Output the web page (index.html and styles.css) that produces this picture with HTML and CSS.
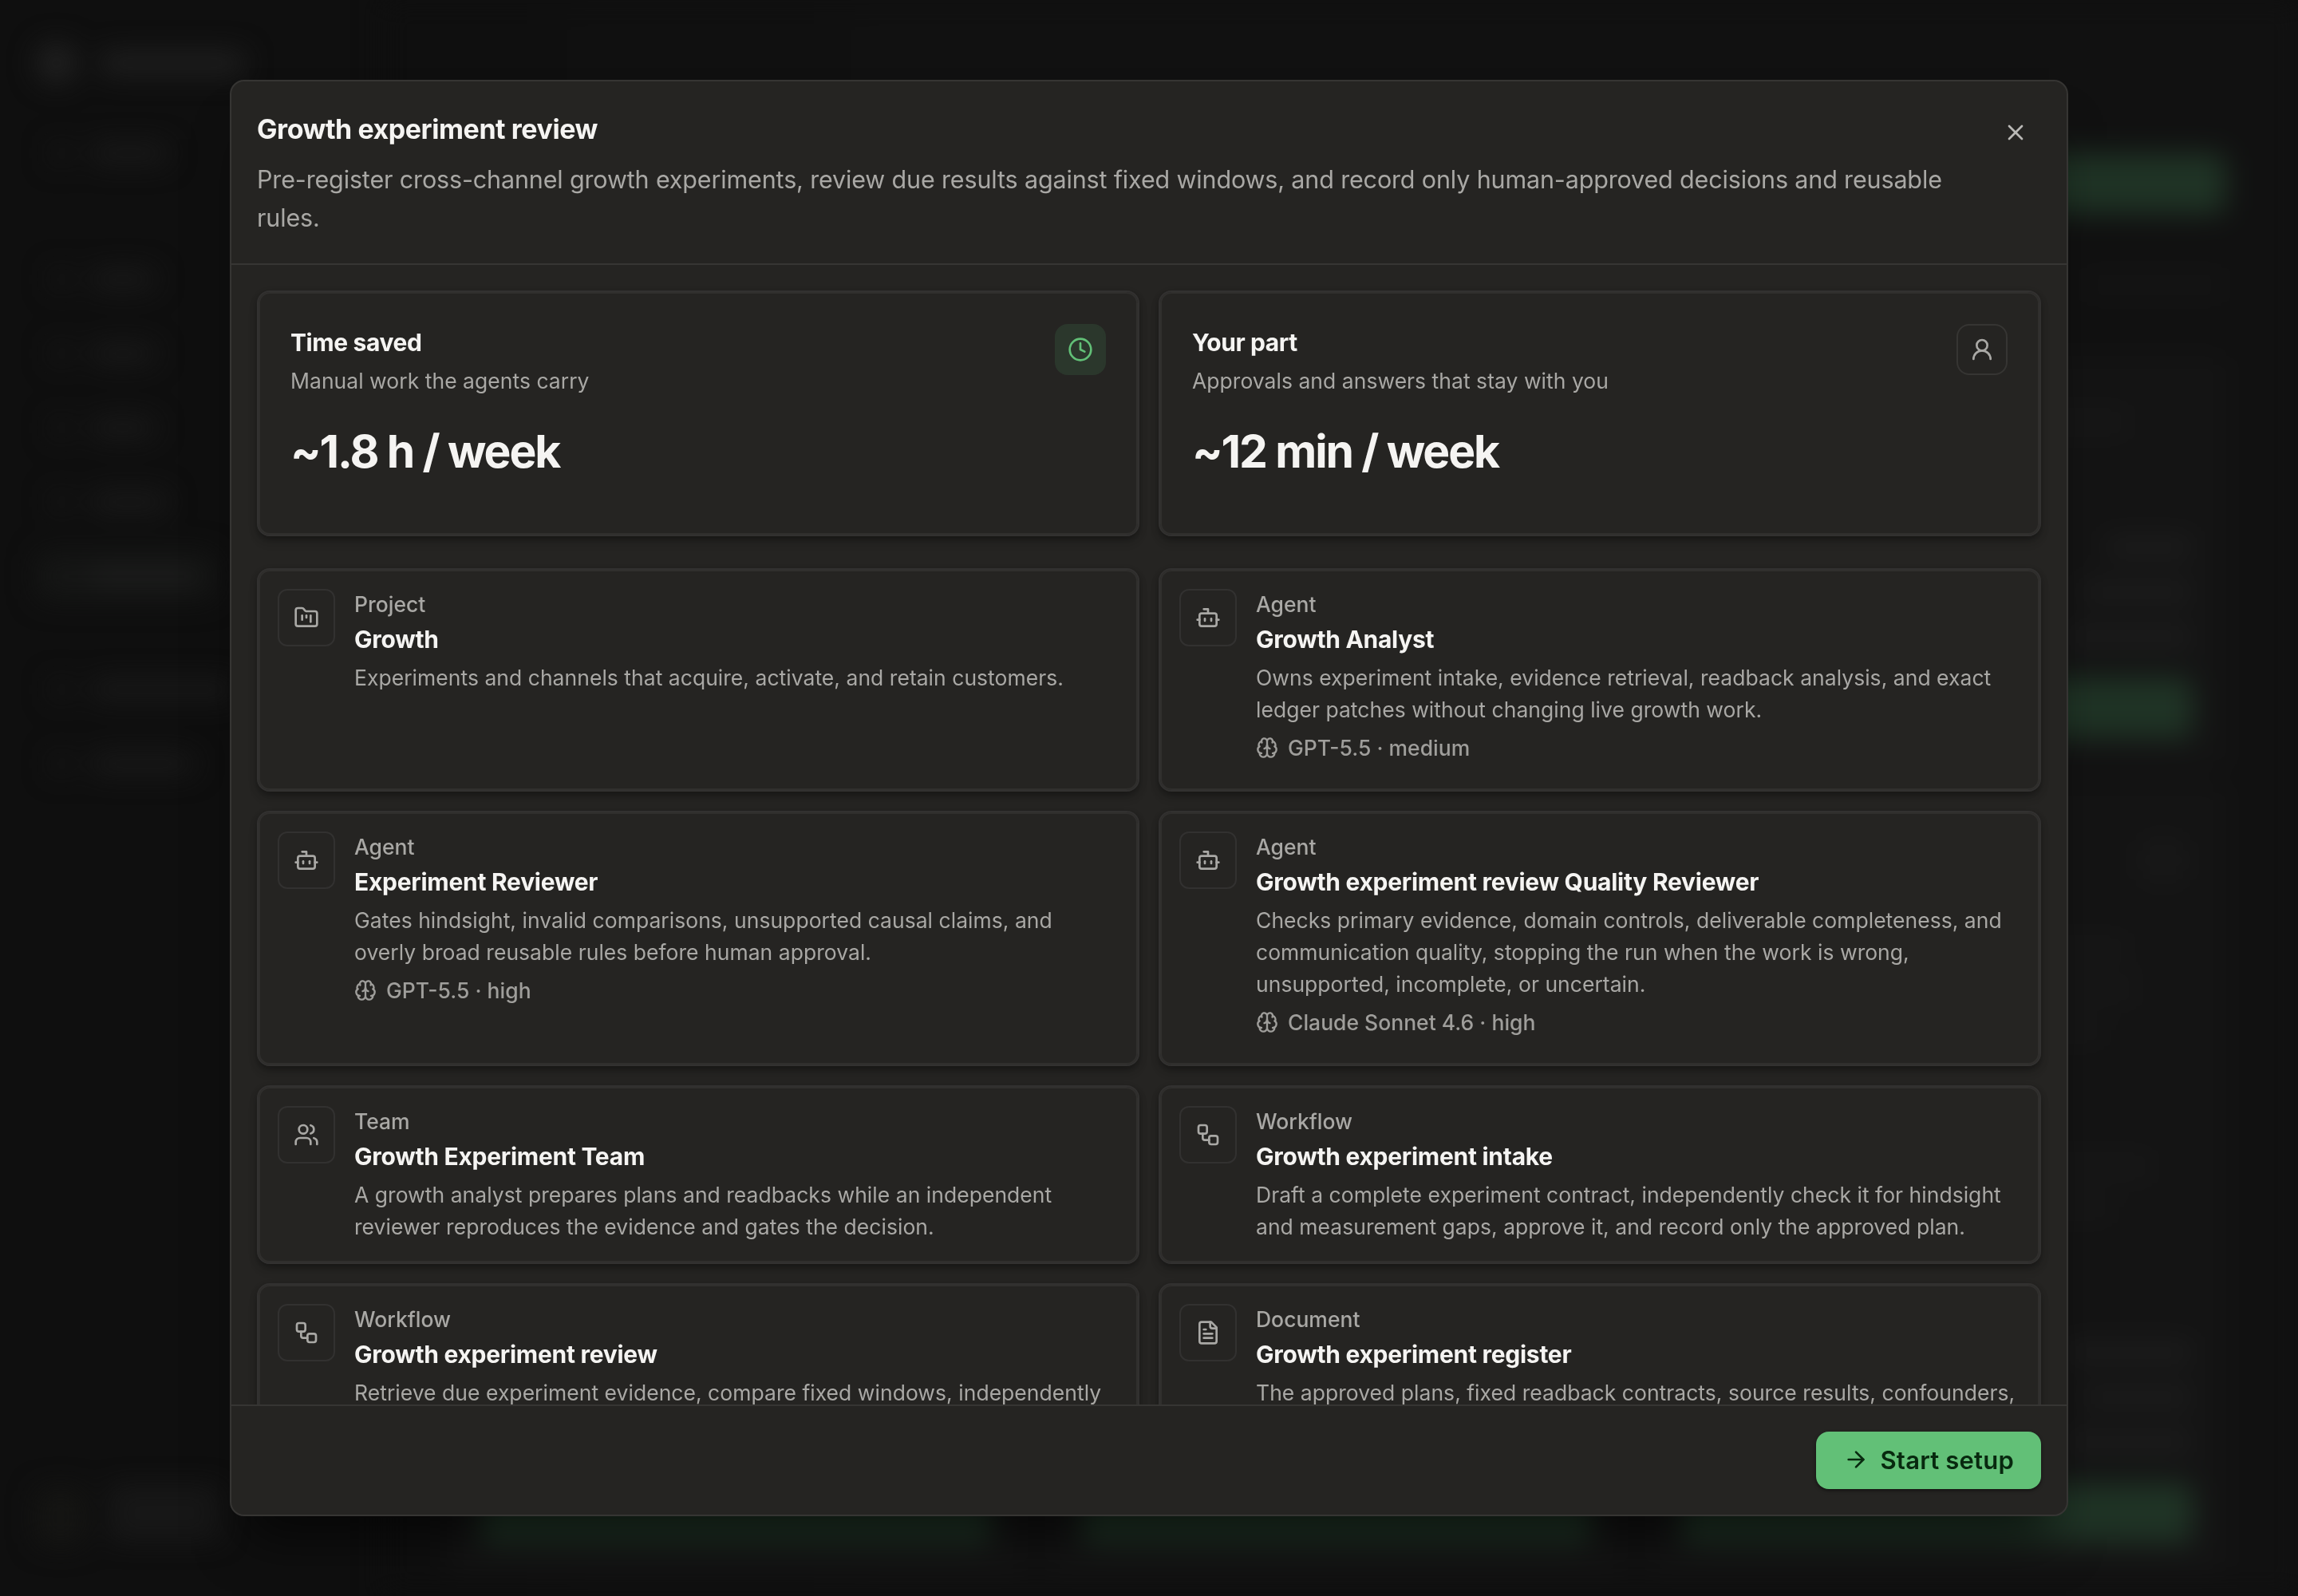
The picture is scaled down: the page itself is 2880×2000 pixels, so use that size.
FILE: index.html
```html
<!DOCTYPE html>
<html lang="en">
<head>
  <meta charset="UTF-8" />
  <meta name="viewport" content="width=device-width, initial-scale=1.0" />
  <title>Growth experiment review</title>
  <link rel="stylesheet" href="styles.css">
</head>
<body>
  <!-- Icon set -->
  <svg class="icon-defs" aria-hidden="true">
    <symbol id="i-close" viewBox="0 0 24 24"><path d="M18 6 6 18" /><path d="m6 6 12 12" /></symbol>
    <symbol id="i-clock" viewBox="0 0 24 24"><circle cx="12" cy="12" r="10" /><path d="M12 6v6l4 2" /></symbol>
    <symbol id="i-user" viewBox="0 0 24 24"><circle cx="12" cy="8" r="5" /><path d="M20 21a8 8 0 0 0-16 0" /></symbol>
    <symbol id="i-project" viewBox="0 0 24 24"><path d="M4 20h16a2 2 0 0 0 2-2V8a2 2 0 0 0-2-2h-7.93a2 2 0 0 1-1.66-.9l-.82-1.2A2 2 0 0 0 7.93 3H4a2 2 0 0 0-2 2v13c0 1.1.9 2 2 2Z" /><path d="M8 10v4" /><path d="M12 10v2" /><path d="M16 10v6" /></symbol>
    <symbol id="i-agent" viewBox="0 0 24 24"><path d="M12 8V4H8" /><rect width="16" height="12" x="4" y="8" rx="2" /><path d="M2 14h2" /><path d="M20 14h2" /><path d="M15 13v2" /><path d="M9 13v2" /></symbol>
    <symbol id="i-team" viewBox="0 0 24 24"><path d="M16 21v-2a4 4 0 0 0-4-4H6a4 4 0 0 0-4 4v2" /><circle cx="9" cy="7" r="4" /><path d="M22 21v-2a4 4 0 0 0-3-3.87" /><path d="M16 3.13a4 4 0 0 1 0 7.75" /></symbol>
    <symbol id="i-workflow" viewBox="0 0 24 24"><rect width="8" height="8" x="3" y="3" rx="2" /><path d="M7 11v4a2 2 0 0 0 2 2h4" /><rect width="8" height="8" x="13" y="13" rx="2" /></symbol>
    <symbol id="i-document" viewBox="0 0 24 24"><path d="M15 2H6a2 2 0 0 0-2 2v16a2 2 0 0 0 2 2h12a2 2 0 0 0 2-2V7Z" /><path d="M14 2v4a2 2 0 0 0 2 2h4" /><path d="M10 9H8" /><path d="M16 13H8" /><path d="M16 17H8" /></symbol>
    <symbol id="i-brain" viewBox="0 0 24 24"><path d="M12 18V5" /><path d="M15 13a4.17 4.17 0 0 1-3-4 4.17 4.17 0 0 1-3 4" /><path d="M17.598 6.5A3 3 0 1 0 12 5a3 3 0 1 0-5.598 1.5" /><path d="M17.997 5.125a4 4 0 0 1 2.526 5.77" /><path d="M18 18a4 4 0 0 0 2-7.464" /><path d="M19.967 17.483A4 4 0 1 1 12 18a4 4 0 1 1-7.967-.517" /><path d="M6 18a4 4 0 0 1-2-7.464" /><path d="M6.003 5.125a4 4 0 0 0-2.526 5.77" /></symbol>
    <symbol id="i-arrow" viewBox="0 0 24 24"><path d="M5 12h14" /><path d="m12 5 7 7-7 7" /></symbol>
  </svg>

  <!-- App behind the dialog -->
  <div class="app" aria-hidden="true">
    <aside class="sidebar">
      <div class="brand"><i class="logo"></i><i class="bar brand-name"></i></div>
      <div class="nav">
        <div class="nav-item first"><i class="dot"></i><i class="bar w-m"></i></div>
        <div class="nav-item"><i class="dot"></i><i class="bar w-s"></i></div>
        <div class="nav-item"><i class="dot"></i><i class="bar w-s"></i></div>
        <div class="nav-item"><i class="dot"></i><i class="bar w-s"></i></div>
        <div class="nav-item"><i class="dot"></i><i class="bar w-m"></i></div>
        <div class="nav-item active"><i class="dot"></i><i class="bar w-l"></i></div>
        <div class="nav-item second"><i class="dot"></i><i class="bar w-xl"></i></div>
        <div class="nav-item"><i class="dot"></i><i class="bar w-l"></i></div>
      </div>
      <div class="account">
        <i class="avatar"></i>
        <div class="account-text"><i class="bar"></i><i class="bar"></i></div>
      </div>
    </aside>
    <div class="main">
      <div class="page-head"><i class="button"></i></div>
      <div class="page-filter"><i class="bar"></i></div>
      <div class="tiles">
        <div class="tile"></div>
        <div class="tile"></div>
        <div class="tile">
          <i class="bar title"></i>
          <div class="stats"><i class="bar s1"></i><i class="bar s2"></i><i class="bar s3"></i></div>
          <i class="button"></i>
        </div>
        <div class="tile"><i class="button"></i></div>
        <div class="tile"><i class="button"></i></div>
        <div class="tile">
          <i class="badge"></i>
          <div class="lines"><i class="bar l1"></i><i class="bar l2"></i><i class="bar l3"></i></div>
          <div class="lines more"><i class="bar l4"></i><i class="bar l5"></i></div>
          <div class="stats"><i class="bar s3"></i><i class="bar s2"></i><i class="bar s3"></i></div>
          <i class="button"></i>
        </div>
      </div>
    </div>
  </div>

  <!-- Dialog -->
  <div class="overlay">
    <div class="modal" role="dialog" aria-labelledby="modal-title">
      <header class="modal-header">
        <div>
          <h1 id="modal-title">Growth experiment review</h1>
          <p>Pre-register cross-channel growth experiments, review due results against fixed windows, and record only human-approved decisions and reusable rules.</p>
        </div>
        <button class="close" aria-label="Close"><svg class="icon"><use href="#i-close" /></svg></button>
      </header>

      <div class="modal-body">
        <div class="grid summary">
          <section class="card stat">
            <div>
              <h2>Time saved</h2>
              <p>Manual work the agents carry</p>
              <strong>~1.8 h / week</strong>
            </div>
            <span class="stat-icon green"><svg class="icon"><use href="#i-clock" /></svg></span>
          </section>
          <section class="card stat">
            <div>
              <h2>Your part</h2>
              <p>Approvals and answers that stay with you</p>
              <strong>~12 min / week</strong>
            </div>
            <span class="stat-icon"><svg class="icon"><use href="#i-user" /></svg></span>
          </section>
        </div>

        <div class="grid">
          <section class="card item">
            <span class="item-icon"><svg class="icon"><use href="#i-project" /></svg></span>
            <div class="item-text">
              <span class="kind">Project</span>
              <h2>Growth</h2>
              <p>Experiments and channels that acquire, activate, and retain customers.</p>
            </div>
          </section>
          <section class="card item">
            <span class="item-icon"><svg class="icon"><use href="#i-agent" /></svg></span>
            <div class="item-text">
              <span class="kind">Agent</span>
              <h2>Growth Analyst</h2>
              <p>Owns experiment intake, evidence retrieval, readback analysis, and exact ledger patches without changing live growth work.</p>
              <div class="model"><svg class="icon"><use href="#i-brain" /></svg>GPT-5.5 · medium</div>
            </div>
          </section>
          <section class="card item">
            <span class="item-icon"><svg class="icon"><use href="#i-agent" /></svg></span>
            <div class="item-text">
              <span class="kind">Agent</span>
              <h2>Experiment Reviewer</h2>
              <p>Gates hindsight, invalid comparisons, unsupported causal claims, and overly broad reusable rules before human approval.</p>
              <div class="model"><svg class="icon"><use href="#i-brain" /></svg>GPT-5.5 · high</div>
            </div>
          </section>
          <section class="card item">
            <span class="item-icon"><svg class="icon"><use href="#i-agent" /></svg></span>
            <div class="item-text">
              <span class="kind">Agent</span>
              <h2>Growth experiment review Quality Reviewer</h2>
              <p>Checks primary evidence, domain controls, deliverable completeness, and communication quality, stopping the run when the work is wrong, unsupported, incomplete, or uncertain.</p>
              <div class="model"><svg class="icon"><use href="#i-brain" /></svg>Claude Sonnet 4.6 · high</div>
            </div>
          </section>
          <section class="card item">
            <span class="item-icon"><svg class="icon"><use href="#i-team" /></svg></span>
            <div class="item-text">
              <span class="kind">Team</span>
              <h2>Growth Experiment Team</h2>
              <p>A growth analyst prepares plans and readbacks while an independent reviewer reproduces the evidence and gates the decision.</p>
            </div>
          </section>
          <section class="card item">
            <span class="item-icon"><svg class="icon"><use href="#i-workflow" /></svg></span>
            <div class="item-text">
              <span class="kind">Workflow</span>
              <h2>Growth experiment intake</h2>
              <p>Draft a complete experiment contract, independently check it for hindsight and measurement gaps, approve it, and record only the approved plan.</p>
            </div>
          </section>
          <section class="card item">
            <span class="item-icon"><svg class="icon"><use href="#i-workflow" /></svg></span>
            <div class="item-text">
              <span class="kind">Workflow</span>
              <h2>Growth experiment review</h2>
              <p>Retrieve due experiment evidence, compare fixed windows, independently</p>
            </div>
          </section>
          <section class="card item">
            <span class="item-icon"><svg class="icon"><use href="#i-document" /></svg></span>
            <div class="item-text">
              <span class="kind">Document</span>
              <h2>Growth experiment register</h2>
              <p>The approved plans, fixed readback contracts, source results, confounders,</p>
            </div>
          </section>
        </div>
      </div>

      <footer class="modal-footer">
        <button class="primary"><svg class="icon"><use href="#i-arrow" /></svg>Start setup</button>
      </footer>
    </div>
  </div>
</body>
</html>
```
FILE: styles.css
```css
:root {
  --page: #0f0f0f;
  --panel: #252422;
  --line: #363533;
  --text: #f5f4f2;
  --muted: #a9a8a5;
  --green: #62c077;
}
* {
  box-sizing: border-box;
}
body {
  margin: 0;
  height: 2000px;
  overflow: hidden;
  background: var(--page);
  color: var(--text);
  font-family: Inter, "Liberation Sans", sans-serif;
}
h1, h2, p {
  margin: 0;
}
button {
  border: 0;
  padding: 0;
  background: none;
  font: inherit;
}
.icon-defs {
  display: none;
}
.icon {
  width: 32px;
  height: 32px;
  flex: none;
  fill: none;
  stroke: currentColor;
  stroke-width: 2;
  stroke-linecap: round;
  stroke-linejoin: round;
}

/* App behind the dialog */
.app {
  display: flex;
  height: 2000px;
  filter: blur(17px);
}
.app i {
  display: block;
}
.bar {
  height: 22px;
  background: #1b1b1b;
  border-radius: 8px;
}
.sidebar {
  width: 480px;
  padding: 54px 0 64px 46px;
  display: flex;
  flex-direction: column;
}
.brand {
  display: flex;
  align-items: center;
  gap: 30px;
}
.logo {
  width: 50px;
  height: 50px;
  border-radius: 50%;
  background: #212121;
}
.brand-name {
  width: 180px;
  height: 26px;
  background: #212121;
}
.nav-item {
  display: flex;
  align-items: center;
  gap: 26px;
  width: 300px;
  height: 60px;
  margin-bottom: 33px;
  padding-left: 18px;
  border-radius: 12px;
}
.nav-item.first {
  margin: 58px 0 98px;
}
.nav-item.second {
  margin-top: 82px;
}
.nav-item.active {
  width: 225px;
  background: #151615;
}
.nav-item.active .bar {
  background: #1e1e1e;
}
.dot {
  width: 24px;
  height: 24px;
  border-radius: 6px;
  background: #161616;
}
.w-s { width: 80px; }
.w-m { width: 96px; }
.w-l { width: 130px; }
.w-xl { width: 180px; }
.account {
  display: flex;
  gap: 30px;
  margin-top: auto;
}
.avatar {
  width: 60px;
  height: 70px;
  border-radius: 12px;
  background: #151513;
}
.account-text {
  display: flex;
  flex-direction: column;
  gap: 12px;
}
.account-text .bar {
  width: 140px;
  height: 24px;
}
.main {
  flex: 1;
  padding: 192px 90px 0 80px;
  background: linear-gradient(90deg, #0f0f0f, #111111 30%);
}
.page-head {
  display: flex;
  justify-content: flex-end;
}
.button {
  height: 76px;
  border-radius: 14px;
  background: #1f3325;
}
.page-head .button {
  width: 340px;
}
.page-filter {
  display: flex;
  justify-content: flex-end;
  padding: 78px 0;
}
.page-filter .bar {
  width: 180px;
  background: #151515;
}
.tiles {
  display: grid;
  grid-template-columns: repeat(3, 1fr);
  grid-template-rows: 517px 989px;
  gap: 20px 28px;
}
.tile {
  display: flex;
  flex-direction: column;
  padding: 38px 42px;
  border-radius: 16px;
  background: #141414;
}
.tile > .button {
  margin-top: auto;
}
.stats {
  display: flex;
  flex-direction: column;
  align-items: flex-end;
  gap: 34px;
  margin: auto 0 40px;
}
.stats .bar {
  background: #1e1e1e;
}
.stats + .button {
  margin-top: 0;
}
.s1 { width: 110px; }
.s2 { width: 140px; }
.s3 { width: 160px; }
.title {
  width: 560px;
  margin-top: 34px;
  background: #191919;
}
.badge {
  align-self: flex-end;
  width: 50px;
  height: 50px;
  margin: 32px 12px 0 0;
  border-radius: 12px;
  background: #191919;
}
.lines {
  display: flex;
  flex-direction: column;
  gap: 28px;
  margin-top: 76px;
}
.lines .bar {
  background: #191919;
}
.lines.more {
  margin-top: 150px;
}
.l1 { width: 560px; }
.l2 { width: 570px; }
.l3 { width: 530px; }
.l4 { width: 590px; }
.l5 { width: 540px; }

/* Dialog shell */
.overlay {
  position: fixed;
  inset: 0;
  display: flex;
  align-items: center;
  justify-content: center;
}
.modal {
  display: flex;
  flex-direction: column;
  width: 2304px;
  height: 1800px;
  overflow: hidden;
  border: 2px solid var(--line);
  border-radius: 18px;
  background: var(--panel);
  box-shadow: 0 50px 60px -24px rgba(0, 0, 0, 0.6);
}
.modal-header {
  display: flex;
  justify-content: space-between;
  padding: 32px 32px 33px;
  border-bottom: 2px solid var(--line);
}
.modal-header h1 {
  font-size: 34px;
  line-height: 56px;
  font-weight: 650;
  letter-spacing: -0.45px;
}
.modal-header p {
  max-width: 2140px;
  margin-top: 11px;
  color: var(--muted);
  font-size: 30.5px;
  line-height: 48px;
  letter-spacing: -0.15px;
}
.close {
  display: flex;
  align-items: center;
  justify-content: center;
  width: 64px;
  height: 64px;
  color: #bab9b6;
}
.modal-body {
  flex: 1;
  min-height: 0;
  overflow: hidden;
  padding: 32px 32px 0;
}
.modal-footer {
  display: flex;
  justify-content: flex-end;
  padding: 32px;
  border-top: 2px solid var(--line);
}
.primary {
  display: flex;
  align-items: center;
  gap: 14px;
  height: 72px;
  padding: 0 34px 2px;
  border-radius: 16px;
  background: var(--green);
  box-shadow: 0 2px 4px rgba(0, 0, 0, 0.5);
  color: #08290f;
  font-size: 31px;
  font-weight: 600;
  letter-spacing: 0.2px;
}

/* Cards */
.grid {
  display: grid;
  grid-template-columns: 1fr 1fr;
  gap: 24px;
}
.summary {
  margin-bottom: 40px;
}
.card {
  display: flex;
  border: 2px solid #323130;
  border-radius: 16px;
  box-shadow: inset 0 0 0 2px #302f2d, 0 4px 8px rgba(0, 0, 0, 0.3), 0 8px 16px -4px rgba(0, 0, 0, 0.15);
}
.card h2 {
  font-size: 30px;
  font-weight: 650;
  letter-spacing: -0.27px;
}
.card p {
  color: var(--muted);
  font-size: 26.5px;
  line-height: 40px;
  letter-spacing: 0.03px;
}
.stat {
  justify-content: space-between;
  height: 308px;
  padding: 40px;
}
.stat h2 {
  line-height: 46px;
  letter-spacing: -0.4px;
}
.stat p {
  margin-top: 5px;
}
.stat strong {
  display: block;
  margin-top: 39px;
  font-size: 57px;
  line-height: 60px;
  font-weight: 650;
  letter-spacing: -2.1px;
}
.stat-icon {
  display: flex;
  align-items: center;
  justify-content: center;
  width: 64px;
  height: 64px;
  border: 2px solid var(--line);
  border-radius: 16px;
  color: var(--muted);
}
.stat-icon.green {
  border-color: #2b372c;
  background: #2b372c;
  color: var(--green);
}
.item {
  gap: 24px;
  padding: 24px 24px 25px;
}
.item-icon {
  display: flex;
  flex: none;
  align-items: center;
  justify-content: center;
  width: 72px;
  height: 72px;
  border: 2px solid #323130;
  border-radius: 12px;
  color: var(--muted);
}
.item-text {
  flex: 1;
}
.kind {
  display: block;
  padding-top: 1px;
  color: var(--muted);
  font-size: 26.5px;
  line-height: 36px;
  font-weight: 500;
}
.item h2 {
  margin: 2px 0 4px;
  line-height: 48px;
}
.model {
  display: flex;
  align-items: center;
  gap: 12px;
  margin: 8px 0;
  color: #9f9e9b;
  font-size: 26.5px;
  line-height: 40px;
  font-weight: 500;
}
.model .icon {
  width: 28px;
  height: 28px;
}
```
